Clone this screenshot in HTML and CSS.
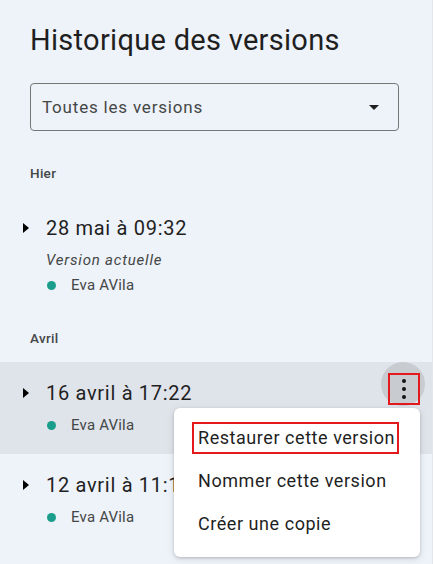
FILE: index.html
```html
<!DOCTYPE html>
<html lang="fr">
<head>
<meta charset="utf-8">
<title>Historique des versions</title>
<link rel="stylesheet" href="styles.css">
</head>
<body>
<div class="panel">
  <h1 class="title">Historique des versions</h1>
  <div class="select">
    <span class="select-text">Toutes les versions</span>
    <span class="select-arrow"></span>
  </div>

  <div class="group-label first">Hier</div>
  <div class="row">
    <span class="caret"></span>
    <div class="row-body">
      <div class="date">28 mai à 09:32</div>
      <div class="current">Version actuelle</div>
      <div class="author tight"><span class="dot"></span>Eva AVila</div>
    </div>
  </div>

  <div class="group-label">Avril</div>
  <div class="row active">
    <span class="caret"></span>
    <div class="row-body">
      <div class="date">16 avril à 17:22</div>
      <div class="author"><span class="dot"></span>Eva AVila</div>
    </div>
    <div class="kebab">
      <div class="kebab-box">
        <span class="kdot"></span><span class="kdot"></span><span class="kdot"></span>
      </div>
    </div>
  </div>
  <div class="row">
    <span class="caret"></span>
    <div class="row-body">
      <div class="date">12 avril à 11:14</div>
      <div class="author"><span class="dot"></span>Eva AVila</div>
    </div>
  </div>

  <div class="menu">
    <div class="menu-item"><span class="highlight">Restaurer cette version</span></div>
    <div class="menu-item">Nommer cette version</div>
    <div class="menu-item">Créer une copie</div>
  </div>
</div>
</body>
</html>
```
FILE: styles.css
```css
html, body {
  margin: 0;
  padding: 0;
}
body {
  background: #eef2f9;
  font-family: Roboto, "Liberation Sans", Arial, sans-serif;
  color: #1f1f1f;
  width: 433px;
  height: 564px;
  overflow: hidden;
}
.panel {
  position: relative;
  width: 432px;
  height: 564px;
  border-right: 1px solid #e3e6ea;
  box-sizing: content-box;
}
.title {
  margin: 0;
  padding: 24px 0 0 30px;
  font-size: 29px;
  line-height: 32px;
  font-weight: 400;
  letter-spacing: 0.3px;
  color: #1f1f1f;
}
.select {
  margin: 27px 0 0 30px;
  width: 369px;
  height: 48px;
  box-sizing: border-box;
  border: 1px solid #747775;
  border-radius: 4px;
  display: flex;
  align-items: center;
  padding: 0 19px 0 11px;
}
.select-text {
  flex: 1;
  font-size: 17px;
  letter-spacing: 0.8px;
  color: #444746;
}
.select-arrow {
  width: 0;
  height: 0;
  border-left: 5px solid transparent;
  border-right: 5px solid transparent;
  border-top: 5px solid #1f1f1f;
}
.group-label {
  padding-left: 30px;
  margin: 14px 0;
  font-size: 13.5px;
  line-height: 20px;
  font-weight: 500;
  letter-spacing: 0.3px;
  color: #444746;
}
.group-label.first {
  margin-top: 32px;
}
.row {
  position: relative;
  display: flex;
  padding: 19px 0 19px 23px;
}
.row.active {
  background: #dfe3ea;
}
.caret {
  width: 0;
  height: 0;
  margin-top: 7px;
  border-top: 5px solid transparent;
  border-bottom: 5px solid transparent;
  border-left: 6px solid #000;
  margin-right: 17px;
}
.row-body {
  display: flex;
  flex-direction: column;
}
.date {
  font-size: 20px;
  line-height: 24px;
  letter-spacing: 0.7px;
  color: #1f1f1f;
}
.current {
  margin-top: 10px;
  font-size: 15px;
  line-height: 20px;
  font-style: italic;
  letter-spacing: 0.8px;
  color: #444746;
}
.author {
  margin-top: 10px;
  font-size: 15px;
  line-height: 20px;
  letter-spacing: 0.2px;
  color: #444746;
  display: flex;
  align-items: center;
}
.author.tight {
  margin-top: 5px;
}
.dot {
  width: 9px;
  height: 9px;
  border-radius: 50%;
  background: #1a9e8b;
  margin: 0 15px 0 1px;
}
.kebab {
  position: absolute;
  top: 0;
  right: 7px;
  width: 44px;
  height: 44px;
  border-radius: 50%;
  background: #c8cbd0;
}
.kebab-box {
  position: absolute;
  left: 7px;
  top: 11px;
  width: 28px;
  height: 28px;
  border: 2px solid #e3191c;
  display: flex;
  flex-direction: column;
  align-items: center;
  justify-content: center;
  gap: 3.5px;
}
.kdot {
  width: 4.5px;
  height: 4.5px;
  border-radius: 50%;
  background: #111;
}
.menu {
  position: absolute;
  left: 174px;
  top: 408px;
  width: 246px;
  height: 149px;
  box-sizing: border-box;
  background: #fff;
  border-radius: 6px;
  box-shadow: 0 1px 3px rgba(0,0,0,0.18), 0 2px 8px rgba(0,0,0,0.10);
  padding: 8px 0 12px;
}
.menu-item {
  height: 43px;
  display: flex;
  align-items: center;
  padding-left: 24px;
  font-size: 18px;
  letter-spacing: 0.55px;
  color: #1f1f1f;
}
.highlight {
  margin-left: -6px;
  padding: 3px 2px 3px 4px;
  border: 2px solid #e3191c;
  line-height: 22px;
}
```
